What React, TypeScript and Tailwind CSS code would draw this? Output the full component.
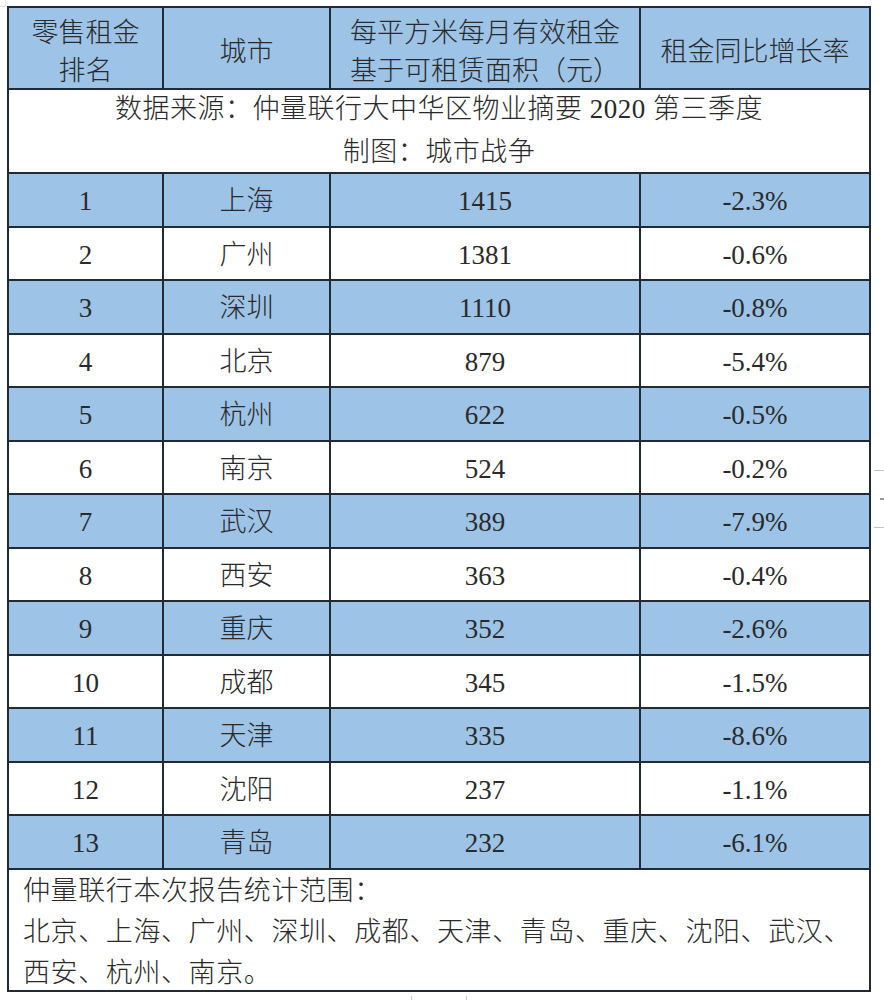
import React from "react";

type RentRow = { rank: number; city: string; rent: number; change: string };

const rows: RentRow[] = [
  { rank: 1, city: "上海", rent: 1415, change: "-2.3%" },
  { rank: 2, city: "广州", rent: 1381, change: "-0.6%" },
  { rank: 3, city: "深圳", rent: 1110, change: "-0.8%" },
  { rank: 4, city: "北京", rent: 879, change: "-5.4%" },
  { rank: 5, city: "杭州", rent: 622, change: "-0.5%" },
  { rank: 6, city: "南京", rent: 524, change: "-0.2%" },
  { rank: 7, city: "武汉", rent: 389, change: "-7.9%" },
  { rank: 8, city: "西安", rent: 363, change: "-0.4%" },
  { rank: 9, city: "重庆", rent: 352, change: "-2.6%" },
  { rank: 10, city: "成都", rent: 345, change: "-1.5%" },
  { rank: 11, city: "天津", rent: 335, change: "-8.6%" },
  { rank: 12, city: "沈阳", rent: 237, change: "-1.1%" },
  { rank: 13, city: "青岛", rent: 232, change: "-6.1%" },
];

const cols = "grid grid-cols-[153px_167px_310px_230px]";
const cell = "flex items-center justify-center border-l-2 border-[#222a33]";

export default function App() {
  return (
    <div
      className="relative w-[884px] h-[1000px] bg-white text-[#2a2a2a]"
      style={{ fontFamily: "'Liberation Serif', 'Noto Sans CJK SC', serif" }}
    >
      <div className="absolute left-0 top-0 h-[7px] w-[6px] border-r border-b border-[#e4e4e4]" />

      <div className="ml-[7px] pt-[6px]">
        <div className="w-[864px] border-2 border-[#222a33] text-[27px] font-light">
          {/* header */}
          <div className={`${cols} h-[80px] bg-[#9dc3e6] leading-[38px]`}>
            <div className="flex flex-col items-center justify-center pt-[6px]">
              <span>零售租金</span>
              <span>排名</span>
            </div>
            <div className={`${cell} pt-[6px]`}>城市</div>
            <div className={`${cell} flex-col pt-[6px]`}>
              <span>每平方米每月有效租金</span>
              <span>基于可租赁面积（元）</span>
            </div>
            <div className={`${cell} pt-[6px]`}>租金同比增长率</div>
          </div>

          {/* source */}
          <div className="flex h-[84px] flex-col items-center justify-center border-t-2 border-[#222a33] leading-[43px] tracking-[0.5px]">
            <span>数据来源：仲量联行大中华区物业摘要 2020 第三季度</span>
            <span>制图：城市战争</span>
          </div>

          {/* data rows */}
          {rows.map((r, i) => (
            <div
              key={r.rank}
              className={`${cols} border-t-2 border-[#222a33] ${
                i % 2 === 0 ? "h-[54px] bg-[#9dc3e6]" : "h-[53px] bg-white"
              }`}
            >
              <div className="flex items-center justify-center pt-[3px]">{r.rank}</div>
              <div className={`${cell} pt-[3px]`}>{r.city}</div>
              <div className={`${cell} pt-[3px]`}>{r.rent}</div>
              <div className={`${cell} pt-[3px]`}>{r.change}</div>
            </div>
          ))}

          {/* footer */}
          <div className="h-[122px] border-t-2 border-[#222a33] pl-[14px] pt-[1px] leading-[41px] tracking-[0.6px]">
            <div>仲量联行本次报告统计范围：</div>
            <div>北京、上海、广州、深圳、成都、天津、青岛、重庆、沈阳、武汉、</div>
            <div>西安、杭州、南京。</div>
          </div>
        </div>
      </div>

      {/* window chrome remnants at the page edge */}
      <div className="absolute left-[874px] top-[470px] h-[1px] w-[10px] bg-[#c4c4c4]" />
      <div className="absolute left-[880px] top-[498px] h-[2px] w-[4px] bg-[#9a9a9a]" />
      <div className="absolute left-[874px] top-[527px] h-[1px] w-[10px] bg-[#c4c4c4]" />
      <div className="absolute left-[411px] top-[996px] h-[4px] w-[56px] border-x border-[#c8c8c8]" />
    </div>
  );
}
